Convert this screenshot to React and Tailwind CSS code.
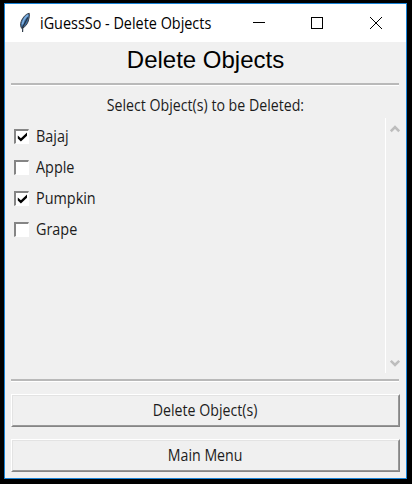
import React from "react";

const items = [
  { name: "Bajaj", checked: true },
  { name: "Apple", checked: false },
  { name: "Pumpkin", checked: true },
  { name: "Grape", checked: false },
];

function Feather() {
  return (
    <svg width="14" height="22" viewBox="0 0 14 22" className="ml-[13px] shrink-0">
      <path d="M11.2 1.2C7.8 2 4.5 5.5 3.2 9.5C2.2 12 2.4 14.5 3.8 16.5C7 15 9.3 12.5 10.3 9C11 6.5 11.8 3 11.2 1.2Z" fill="#3f6fa3" stroke="#3c4047" strokeWidth="1" />
      <path d="M10 3C7.2 5 5 9 4.4 12.5" stroke="#7fb0e0" strokeWidth="1.6" fill="none" />
      <path d="M9.8 5.5L4.8 15L4.6 20" stroke="#22303f" strokeWidth="1.1" fill="none" />
    </svg>
  );
}

function Separator() {
  return <div className="h-[3px] w-[388px] border-t-2 border-b border-t-[#b9b9b9] border-b-white" />;
}

function Checkbox({ checked }) {
  return (
    <span className="flex h-[15px] w-[15px] shrink-0 items-center justify-center border-t-2 border-l-2 border-r border-b border-t-[#858585] border-l-[#858585] border-r-white border-b-white bg-white">
      {checked && (
        <svg width="11" height="10" viewBox="0 0 11 10">
          <path d="M0.8 3.4L3.9 6.2L10 0.4V3.8L3.9 9.6L0.8 6.6Z" fill="#000" />
        </svg>
      )}
    </span>
  );
}

function Button({ children }) {
  return (
    <button className="h-[33px] w-[389px] border border-t-white border-l-white border-r-[#858585] border-b-[#858585]">
      <span className="flex h-full w-full items-center justify-center border border-t-[#e3e3e3] border-l-[#e3e3e3] border-r-[#989898] border-b-[#989898]">
        <span className="scale-x-[0.885] pb-px whitespace-nowrap">{children}</span>
      </span>
    </button>
  );
}

export default function App() {
  return (
    <div className="h-[484px] w-[412px] bg-black pt-[3px] pl-1 font-['Open_Sans',sans-serif] text-[16px] leading-5 text-[#1c1c1c]">
      <div className="flex h-[476px] w-[403px] flex-col border border-[#1883d7] bg-[#f0f0f0]">
        <header className="flex h-[38px] shrink-0 items-center bg-white text-black">
          <Feather />
          <h1 className="ml-2 w-[171px] origin-left scale-x-[0.9] pb-px text-[16px] whitespace-nowrap">iGuessSo - Delete Objects</h1>
          <svg width="154" height="13" viewBox="0 0 154 13" className="mb-px ml-[37px]" fill="none" stroke="#000" shapeRendering="crispEdges">
            <path d="M5 6.5H17M63.5 1.5H74.5V12.5H63.5Z" />
            <path d="M122 1L134 13M134 1L122 13" shapeRendering="auto" />
          </svg>
        </header>
        <main className="flex flex-1 flex-col pl-[6px]">
          <h2 className="h-[41px] w-[389px] pt-[2px] text-center font-['Liberation_Sans',sans-serif] text-[24px] leading-8 text-black">Delete Objects</h2>
          <Separator />
          <p className="mt-2 flex h-6 w-[388px] items-center justify-center pb-[3px] whitespace-nowrap">
            <span className="scale-x-[0.885]">Select Object(s) to be Deleted:</span>
          </p>
          <div className="flex h-[255px]">
            <ul className="flex w-[374px] flex-col pt-[3px] pl-[3px]">
              {items.map((item) => (
                <li key={item.name} className="flex h-[31px] items-center">
                  <Checkbox checked={item.checked} />
                  <span className="ml-[7px] origin-left scale-x-[0.9] pb-px">{item.name}</span>
                </li>
              ))}
            </ul>
            <div className="flex w-[15px] flex-col items-end justify-between border-l border-white pt-[6px] pb-[5px]">
              <svg width="10" height="10" viewBox="0 0 10 10" fill="none" stroke="#bdbdbd" strokeWidth="2.6"><path d="M0.8 7.4L5 3.2L9.2 7.4" /></svg>
              <svg width="10" height="10" viewBox="0 0 10 10" fill="none" stroke="#bdbdbd" strokeWidth="2.6"><path d="M0.8 2.8L5 7L9.2 2.8" /></svg>
            </div>
          </div>
          <div className="mt-[6px]"><Separator /></div>
          <div className="mt-3 flex flex-col gap-3">
            <Button>Delete Object(s)</Button>
            <Button>Main Menu</Button>
          </div>
        </main>
      </div>
    </div>
  );
}
